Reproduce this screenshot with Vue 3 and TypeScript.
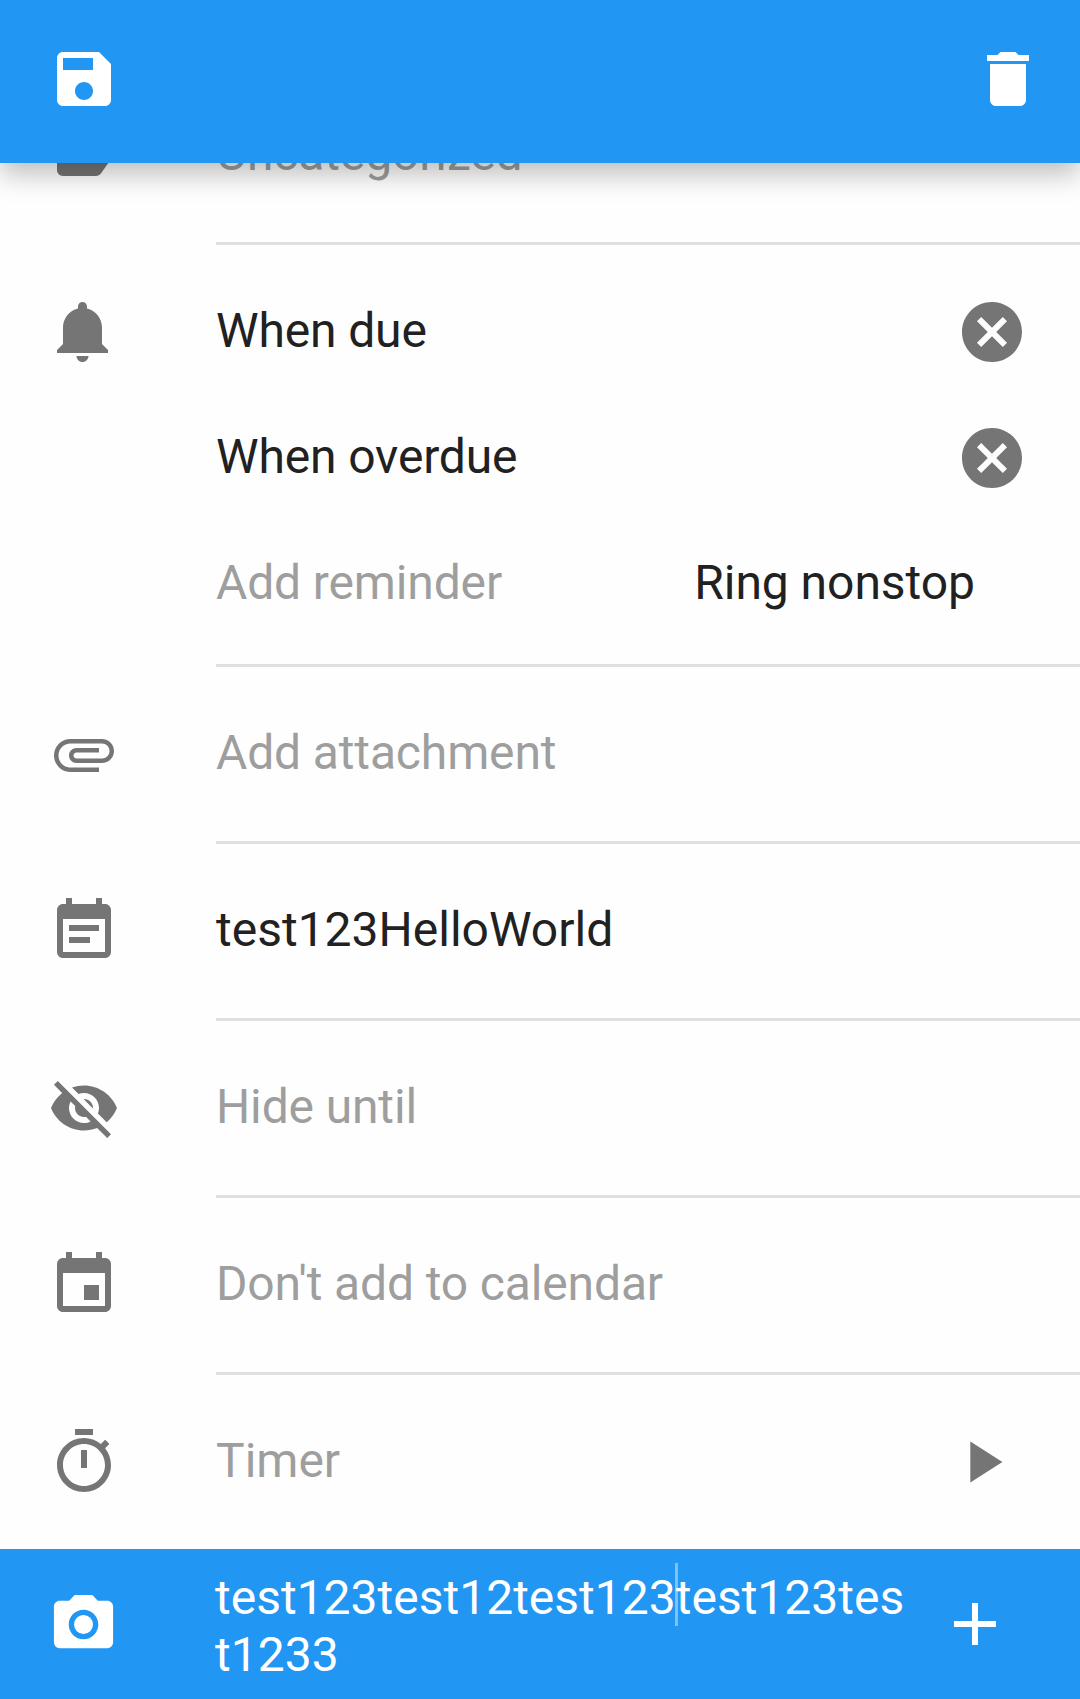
<script setup lang="ts">
interface Row {
  icon: string
  text: string
  muted: boolean
  action?: string
}

const icons: Record<string, string> = {
  save: 'M17 3H5c-1.11 0-2 .9-2 2v14c0 1.1.89 2 2 2h14c1.1 0 2-.9 2-2V7l-4-4zm-5 16c-1.66 0-3-1.34-3-3s1.34-3 3-3 3 1.34 3 3-1.34 3-3 3zm3-10H5V5h10v4z',
  trash: 'M6 19c0 1.1.9 2 2 2h8c1.1 0 2-.9 2-2V7H6v12zM19 4h-3.5l-1-1h-5l-1 1H5v2h14V4z',
  label: 'M17.63 5.84C17.27 5.33 16.67 5 16 5L5 5.01C3.9 5.01 3 5.9 3 7v10c0 1.1.9 1.99 2 1.99L16 19c.67 0 1.27-.33 1.63-.84L22 12l-4.37-6.16z',
  bell: 'M11.5 22c1.1 0 2-.9 2-2h-4c0 1.1.9 2 2 2zm6.5-6v-5.5c0-3.07-2.13-5.64-5-6.32V3.5c0-.83-.67-1.5-1.5-1.5S10 2.67 10 3.5v.68c-2.87.68-5 3.25-5 6.32V16l-2 2v1h17v-1l-2-2z',
  cancel: 'M12 2C6.47 2 2 6.47 2 12s4.47 10 10 10 10-4.47 10-10S17.53 2 12 2zm5 13.59L15.59 17 12 13.41 8.41 17 7 15.59 10.59 12 7 8.41 8.41 7 12 10.59 15.59 7 17 8.41 13.41 12 17 15.59z',
  attachment: 'M7.5 18C4.46 18 2 15.54 2 12.5S4.46 7 7.5 7H18c2.21 0 4 1.79 4 4s-1.79 4-4 4H9.5C8.12 15 7 13.88 7 12.5S8.12 10 9.5 10H17v1.5H9.5c-.55 0-1 .45-1 1s.45 1 1 1H18c1.38 0 2.5-1.12 2.5-2.5S19.38 8.5 18 8.5H7.5c-2.21 0-4 1.79-4 4s1.79 4 4 4H17V18H7.5z',
  note: 'M17 10H7v2h10v-2zm2-7h-1V1h-2v2H8V1H6v2H5c-1.11 0-1.99.9-1.99 2L3 19c0 1.1.89 2 2 2h14c1.1 0 2-.9 2-2V5c0-1.1-.9-2-2-2zm0 16H5V8h14v11zm-5-5H7v2h7v-2z',
  hidden: 'M12 7c2.76 0 5 2.24 5 5 0 .65-.13 1.26-.36 1.83l2.92 2.92c1.51-1.26 2.7-2.89 3.43-4.75-1.73-4.39-6-7.5-11-7.5-1.4 0-2.74.25-3.98.7l2.16 2.16C10.74 7.13 11.35 7 12 7zM2 4.27l2.28 2.28.46.46C3.08 8.3 1.78 10.02 1 12c1.73 4.39 6 7.5 11 7.5 1.55 0 3.03-.3 4.38-.84l.42.42L19.73 22 21 20.73 3.27 3 2 4.27zM7.53 9.8l1.55 1.55c-.05.21-.08.43-.08.65 0 1.66 1.34 3 3 3 .22 0 .44-.03.65-.08l1.55 1.55c-.67.33-1.41.53-2.2.53-2.76 0-5-2.24-5-5 0-.79.2-1.53.53-2.2zm4.31-.78l3.15 3.15.02-.16c0-1.66-1.34-3-3-3l-.17.01z',
  event: 'M17 12h-5v5h5v-5zM16 1v2H8V1H6v2H5c-1.11 0-1.99.9-1.99 2L3 19c0 1.1.89 2 2 2h14c1.1 0 2-.9 2-2V5c0-1.1-.9-2-2-2h-1V1h-2zm3 18H5V8h14v11z',
  timer: 'M15 1H9v2h6V1zm-4 13h2V8h-2v6zm8.03-6.61l1.42-1.42c-.43-.51-.9-.99-1.41-1.41l-1.42 1.42C16.07 4.74 14.12 4 12 4c-4.97 0-9 4.03-9 9s4.02 9 9 9 9-4.03 9-9c0-2.12-.74-4.07-1.97-5.61zM12 20c-3.87 0-7-3.13-7-7s3.13-7 7-7 7 3.13 7 7-3.13 7-7 7z',
  play: 'M8 5v14l11-7z',
  camera: 'M12 8.8a3.2 3.2 0 1 0 0 6.4 3.2 3.2 0 1 0 0-6.4zM9 2L7.17 4H4c-1.1 0-2 .9-2 2v12c0 1.1.9 2 2 2h16c1.1 0 2-.9 2-2V6c0-1.1-.9-2-2-2h-3.17L15 2H9zm3 15c-2.76 0-5-2.24-5-5s2.24-5 5-5 5 2.24 5 5-2.24 5-5 5z',
  plus: 'M19 13h-6v6h-2v-6H5v-2h6V5h2v6h6v2z',
}

const reminders: string[] = ['When due', 'When overdue']

const rows: Row[] = [
  { icon: 'attachment', text: 'Add attachment', muted: true },
  { icon: 'note', text: 'test123HelloWorld', muted: false },
  { icon: 'hidden', text: 'Hide until', muted: true },
  { icon: 'event', text: "Don't add to calendar", muted: true },
  { icon: 'timer', text: 'Timer', muted: true, action: 'play' },
]
</script>

<template>
  <div class="screen">
    <header class="toolbar">
      <svg class="icon" viewBox="0 0 24 24"><path :d="icons.save" /></svg>
      <svg class="icon" viewBox="0 0 24 24"><path :d="icons.trash" /></svg>
    </header>

    <main class="list">
      <section class="row">
        <svg class="icon lead" viewBox="0 0 24 24"><path :d="icons.label" /></svg>
        <div class="body"><span class="text muted tight">Uncategorized</span></div>
      </section>

      <section class="row reminders">
        <svg class="icon lead" viewBox="0 0 24 24"><path :d="icons.bell" /></svg>
        <div class="body">
          <div v-for="item in reminders" :key="item" class="line">
            <span class="text tight">{{ item }}</span>
            <svg class="icon clear" viewBox="0 0 24 24"><path :d="icons.cancel" /></svg>
          </div>
          <div class="line">
            <span class="text muted tight">Add reminder</span>
            <span class="text ring">Ring nonstop</span>
          </div>
        </div>
      </section>

      <section v-for="row in rows" :key="row.icon" class="row">
        <svg class="icon lead" viewBox="0 0 24 24"><path :d="icons[row.icon]" /></svg>
        <div class="body">
          <span class="text" :class="{ muted: row.muted, tight: row.text.includes(' ') }">{{ row.text }}</span>
          <svg v-if="row.action" class="icon play" viewBox="0 0 24 24">
            <path :d="icons[row.action]" />
          </svg>
        </div>
      </section>
    </main>

    <footer class="comment">
      <svg class="icon camera" viewBox="0 0 24 24"><path :d="icons.camera" /></svg>
      <p class="input">test123test12test123<i class="caret"></i>test123test1233</p>
      <svg class="icon plus" viewBox="0 0 24 24"><path :d="icons.plus" /></svg>
    </footer>
  </div>
</template>

<style>
body {
  background: #fefefe;
}
</style>

<style scoped>
.screen {
  display: flex;
  flex-direction: column;
  width: 1080px;
  height: 1699px;
  overflow: hidden;
  background: #fefefe;
  color: #212121;
  font-family: Roboto, sans-serif;
  font-size: 48px;
  line-height: 56px;
}

.icon {
  display: block;
  flex: none;
  width: 72px;
  height: 72px;
  fill: currentColor;
}

.toolbar {
  position: relative;
  z-index: 1;
  display: flex;
  flex: none;
  box-sizing: border-box;
  justify-content: space-between;
  height: 163px;
  padding: 43px 36px 0 48px;
  background: #2196f3;
  color: #fff;
  box-shadow: 0 11px 26px rgba(0, 0, 0, 0.26);
}

/* The list is scrolled, so its first row starts beneath the toolbar. */
.list {
  flex: none;
  margin-top: -95px;
}

.row {
  display: flex;
  align-items: center;
  height: 177px;
}

.row .lead {
  margin: 0 96px 3px 48px;
  color: #757575;
}

.body {
  display: flex;
  flex: 1;
  box-sizing: border-box;
  align-items: center;
  justify-content: space-between;
  height: 100%;
  border-bottom: 3px solid #e0e0e0;
}

.row:last-child {
  height: 174px;
}

.row:last-child .lead {
  margin-bottom: 0;
}

.row:last-child .body {
  border-bottom: 0;
}

.text {
  padding-bottom: 2px;
  white-space: nowrap;
}

.tight {
  letter-spacing: -0.14px;
}

.muted {
  color: #9e9e9e;
}

.reminders {
  align-items: flex-start;
  height: 422px;
}

.reminders .lead {
  margin-top: 51px;
}

.reminders .body {
  flex-direction: column;
  align-items: stretch;
  justify-content: flex-start;
  padding-top: 24px;
}

.line {
  display: flex;
  align-items: center;
  justify-content: space-between;
  height: 126px;
}

.clear {
  margin-right: 52px;
  color: #757575;
}

.ring {
  margin-right: 105px;
  letter-spacing: -0.05px;
}

.play {
  width: 70px;
  height: 70px;
  margin-right: 63px;
  color: #757575;
}

.comment {
  display: flex;
  flex: none;
  box-sizing: border-box;
  align-items: center;
  height: 150px;
  padding-left: 48px;
  background: #2196f3;
  color: #fff;
}

.camera {
  width: 71px;
  height: 71px;
}

.input {
  width: 700px;
  margin: 0 24px 0 96px;
  padding-top: 4px;
  line-height: 57px;
  word-break: break-all;
}

/* Overlays the text without taking part in line breaking. */
.caret {
  position: absolute;
  width: 3px;
  height: 63px;
  margin: -6px 0 0 -1px;
  background: rgba(255, 255, 255, 0.42);
}
</style>
